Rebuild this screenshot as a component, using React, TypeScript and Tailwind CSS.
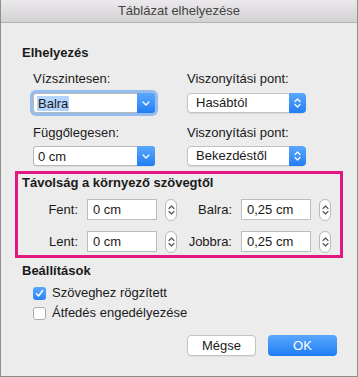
import React from "react";

function ChevronDown({ className = "" }: { className?: string }) {
  return (
    <svg width="8" height="5" viewBox="0 0 8 5" className={className}>
      <path d="M1 1 L4 4 L7 1" fill="none" stroke="currentColor" strokeWidth="1.3" strokeLinecap="round" strokeLinejoin="round" />
    </svg>
  );
}

function UpDown({ color = "currentColor" }: { color?: string }) {
  return (
    <svg width="7" height="12" viewBox="0 0 7 12">
      <path d="M1 4.5 L3.5 2 L6 4.5" fill="none" stroke={color} strokeWidth="1.2" strokeLinecap="round" strokeLinejoin="round" />
      <path d="M1 7.5 L3.5 10 L6 7.5" fill="none" stroke={color} strokeWidth="1.2" strokeLinecap="round" strokeLinejoin="round" />
    </svg>
  );
}

function Combo({ value, focused = false }: { value: string; focused?: boolean }) {
  return (
    <div
      className={
        "flex h-[20px] w-[122px] bg-white border border-[#b8b8b8] rounded-[3px] " +
        (focused ? "shadow-[0_0_0_3px_#94bcef]" : "shadow-[0_1px_0_rgba(0,0,0,0.06)]")
      }
    >
      <div className="flex-1 flex items-center pl-[3px]">
        <span className={"leading-[15px] px-[1px] " + (focused ? "bg-[#b3d4fd]" : "")}>{value}</span>
      </div>
      <div className="w-[18px] -my-px -mr-px flex items-center justify-center rounded-r-[3px] bg-linear-to-b from-[#5aa7fc] to-[#1f7ef5] text-white">
        <ChevronDown />
      </div>
    </div>
  );
}

function Popup({ value }: { value: string }) {
  return (
    <div className="flex h-[20px] w-[119px] bg-white border border-[#c2c2c2] rounded-[4px] shadow-[0_1px_1px_rgba(0,0,0,0.08)]">
      <div className="flex-1 flex items-center pl-[8px]">{value}</div>
      <div className="w-[17px] -my-px -mr-px flex items-center justify-center rounded-r-[4px] bg-linear-to-b from-[#5aa7fc] to-[#1f7ef5]">
        <UpDown color="#ffffff" />
      </div>
    </div>
  );
}

function Stepper() {
  return (
    <div className="ml-[8px] w-[12px] h-[22px] bg-white border border-[#b9b9b9] rounded-full flex items-center justify-center text-[#555]">
      <UpDown />
    </div>
  );
}

function Field({ value }: { value: string }) {
  return (
    <div className="ml-[9px] w-[70px] h-[21px] bg-white border border-[#bdbdbd] flex items-center pl-[5px]">
      {value}
    </div>
  );
}

function Checkbox({ checked, label }: { checked: boolean; label: string }) {
  return (
    <div className="flex items-center h-[16px] pl-[18px]">
      {checked ? (
        <div className="w-[13px] h-[13px] rounded-[3px] bg-linear-to-b from-[#5aa7fc] to-[#2a82f6] flex items-center justify-center">
          <svg width="9" height="9" viewBox="0 0 9 9">
            <path d="M1.5 4.8 L3.6 7 L7.6 1.5" fill="none" stroke="#fff" strokeWidth="1.5" strokeLinecap="round" strokeLinejoin="round" />
          </svg>
        </div>
      ) : (
        <div className="w-[13px] h-[13px] rounded-[3px] bg-white border border-[#acacac]" />
      )}
      <span className="ml-[6px]">{label}</span>
    </div>
  );
}

export default function App() {
  return (
    <div className="w-[358px] h-[377px] bg-[#ececec] border-x border-b border-[#8f8f8f] flex flex-col text-[13px] leading-[16px] text-[#1a1a1a] font-['Liberation_Sans',Arial,sans-serif]">
      <div className="h-[23px] shrink-0 bg-linear-to-b from-[#ebe9eb] to-[#d3d1d3] border-b border-[#b1b1b1] flex items-center justify-center text-[#444]">
        Táblázat elhelyezése
      </div>
      <div className="px-[14px] flex flex-col">
        <div className="mt-[22px] pl-[7px] font-bold">Elhelyezés</div>
        <div className="pl-[18px] grid grid-cols-[154px_1fr]">
          <div className="mt-[10px]">Vízszintesen:</div>
          <div className="mt-[10px]">Viszonyítási pont:</div>
          <div className="mt-[6px]"><Combo value="Balra" focused /></div>
          <div className="mt-[6px]"><Popup value="Hasábtól" /></div>
          <div className="mt-[12px]">Függőlegesen:</div>
          <div className="mt-[12px]">Viszonyítási pont:</div>
          <div className="mt-[5px]"><Combo value="0 cm" /></div>
          <div className="mt-[5px]"><Popup value="Bekezdéstől" /></div>
        </div>
        <div className="mt-[5px] w-[328px] border-[3px] border-[#e2177f] pt-[1px] pb-[3px]">
          <div className="pl-[4px] font-bold">Távolság a környező szövegtől</div>
          <div className="mt-[8px] flex items-center h-[21px]">
            <div className="w-[60px] text-right">Fent:</div>
            <Field value="0 cm" />
            <Stepper />
            <div className="w-[55px] text-right">Balra:</div>
            <Field value="0,25 cm" />
            <Stepper />
          </div>
          <div className="mt-[11px] flex items-center h-[21px]">
            <div className="w-[60px] text-right">Lent:</div>
            <Field value="0 cm" />
            <Stepper />
            <div className="w-[55px] text-right">Jobbra:</div>
            <Field value="0,25 cm" />
            <Stepper />
          </div>
        </div>
        <div className="mt-[5px] pl-[7px] font-bold">Beállítások</div>
        <div className="mt-[6px]"><Checkbox checked label="Szöveghez rögzített" /></div>
        <div className="mt-[4px]"><Checkbox checked={false} label="Átfedés engedélyezése" /></div>
        <div className="mt-[14px] flex justify-end pr-[6px] gap-[12px]">
          <div className="w-[69px] h-[21px] bg-white border border-[#c4c4c4] rounded-[4px] flex items-center justify-center shadow-[0_1px_0_rgba(0,0,0,0.05)]">
            Mégse
          </div>
          <div className="w-[69px] h-[21px] rounded-[4px] bg-linear-to-b from-[#5aa8fc] to-[#1c7cf4] text-white flex items-center justify-center">
            OK
          </div>
        </div>
      </div>
    </div>
  );
}
